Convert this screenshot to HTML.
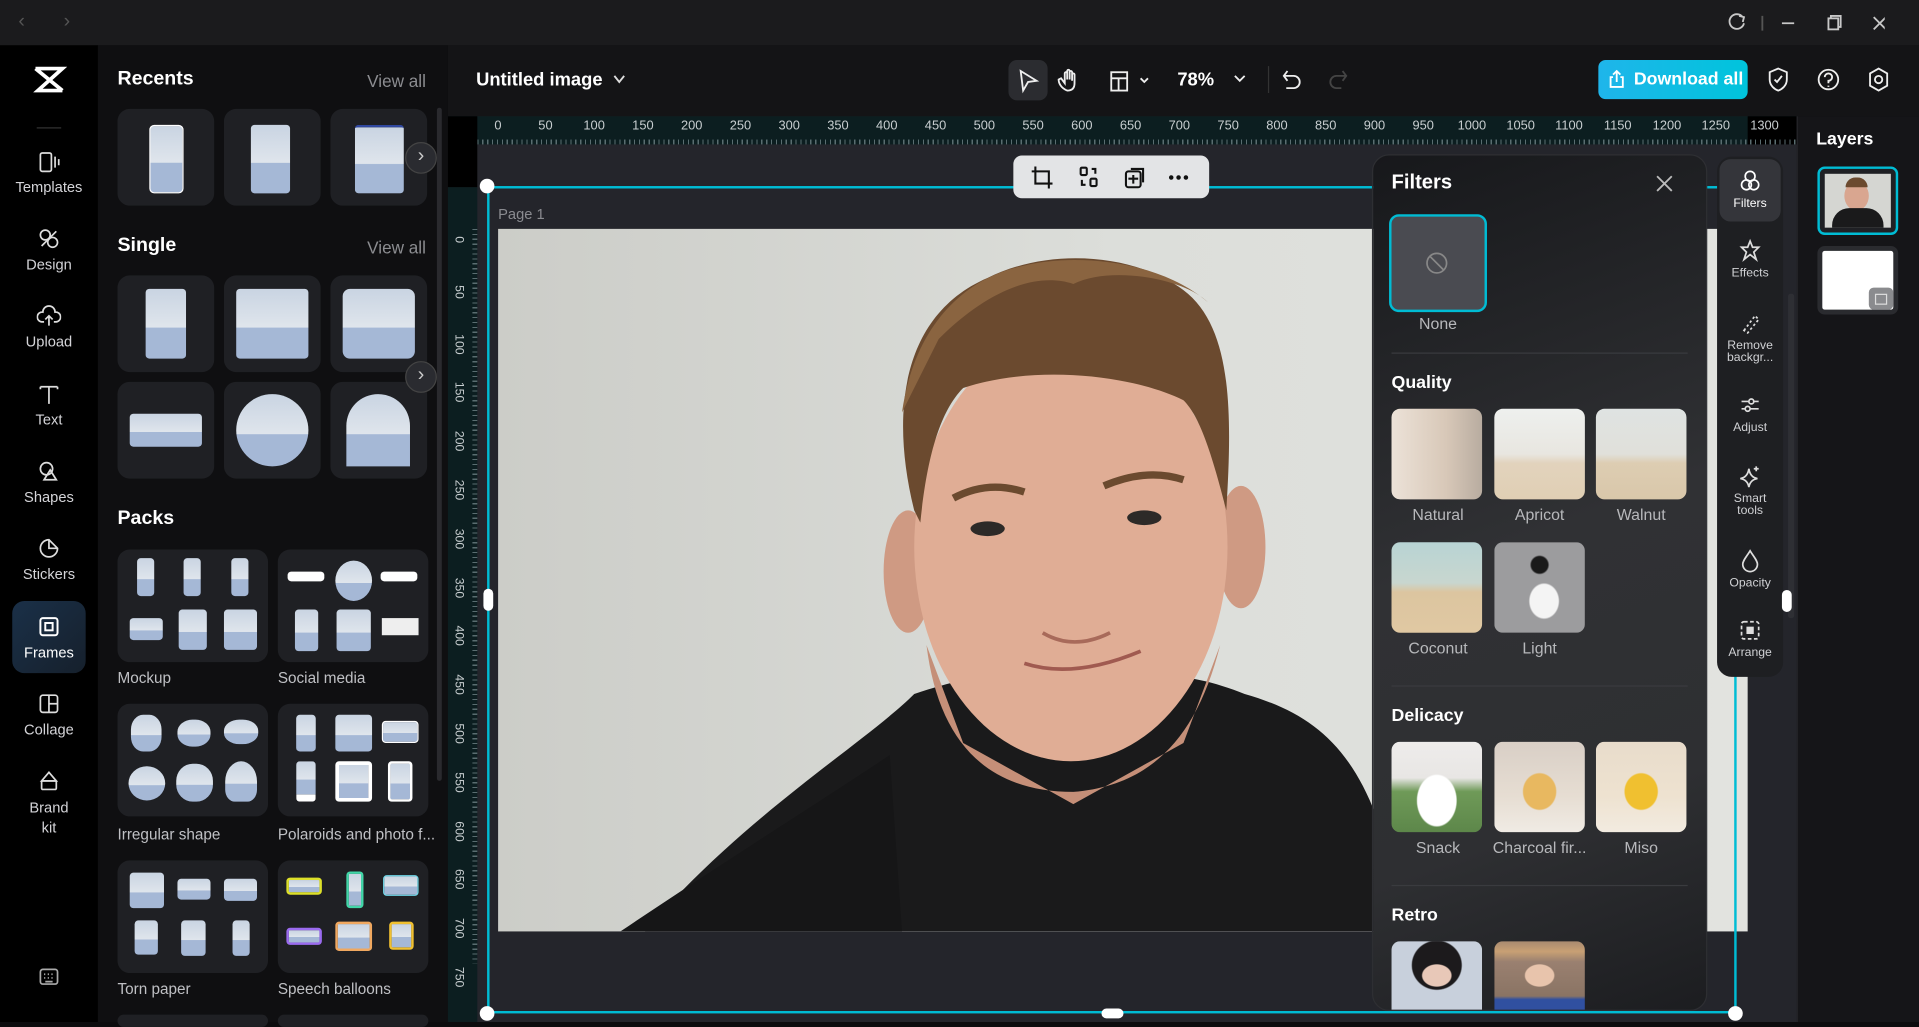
<!DOCTYPE html>
<html><head><meta charset="utf-8">
<style>
*{box-sizing:border-box;margin:0;padding:0}
html,body{width:1919px;height:1022px;overflow:hidden;background:#0c0c0e;font-family:"Liberation Sans",sans-serif}
#w{position:absolute;left:0;top:0;width:1568px;height:835px;transform:scale(1.22385,1.22395);transform-origin:0 0;background:#0c0c0e}
.a{position:absolute}
.rl{color:#cfd3d6}
.card{position:absolute;background:#1f2024;border-radius:10px}
.ph{position:absolute;background:linear-gradient(180deg,#c9d4e2 0%,#dfe5ec 55%,#a5b8d6 56%,#a5b8d6 100%);border-radius:3px}
.nav{position:absolute;left:0;width:80px;text-align:center;color:#d4d4d8;font-size:12px}
.nav svg{display:block;margin:0 auto 4px}
.lbl{position:absolute;color:#bfc0c4;font-size:12.5px}
.h{position:absolute;color:#fff;font-weight:bold;font-size:16px}
.th{position:absolute;width:74px;height:74px;border-radius:7px;overflow:hidden}
.tl{position:absolute;width:90px;text-align:center;color:#b7b8bb;font-size:13px}
.tool{position:absolute;left:0;width:54px;text-align:center;color:#d0d1d4;font-size:10px;line-height:10px}
.tool svg{display:block;margin:0 auto 4px}
</style></head><body><div id="w">
<!-- title bar -->
<div class="a" style="left:0;top:0;width:1568px;height:37px;background:#1b1b1d"></div>
<div class="a" style="left:15px;top:9px;color:#555;font-size:16px">&#8249;</div>
<div class="a" style="left:52px;top:9px;color:#555;font-size:16px">&#8250;</div>
<svg class="a" style="left:1410px;top:10px" width="130" height="18" stroke="#c8c8c8" fill="none" stroke-width="1.5">
<path d="M14 4 A6 6 0 1 0 15 9"/><path d="M11 3 L15 4 L14 8"/>
<line x1="30" y1="3" x2="30" y2="15" stroke="#555"/>
<line x1="46" y1="9" x2="56" y2="9"/>
<rect x="84" y="5" width="8" height="9"/><path d="M86 5 V3 H94 V12 H92"/>
<path d="M121 4 L131 14 M131 4 L121 14"/></svg>
<!-- left rail -->
<div class="a" style="left:0;top:37px;width:80px;height:798px;background:#000"></div>
<svg class="a" style="left:27px;top:54px" width="28" height="24" fill="none" stroke="#fff" stroke-width="3"><path d="M2 2 H24 L4 20 H24 M2 2 L24 20"/></svg>
<div class="a" style="left:30px;top:104px;width:20px;height:1px;background:#333"></div>
<div class="nav" style="top:122px"><svg width="20" height="20" fill="none" stroke="#ddd" stroke-width="1.4"><rect x="3" y="3" width="9" height="15" rx="1.5"/><path d="M15 6v9M18 8v5"/></svg>Templates</div>
<div class="nav" style="top:185px"><svg width="20" height="20" fill="none" stroke="#ddd" stroke-width="1.4"><circle cx="7" cy="7" r="4"/><circle cx="13" cy="13" r="4"/><path d="M4 16 L16 4"/></svg>Design</div>
<div class="nav" style="top:248px"><svg width="20" height="20" fill="none" stroke="#ddd" stroke-width="1.4"><path d="M6 15 H4 A4 4 0 0 1 5 7 A5 5 0 0 1 15 7 A4 4 0 0 1 16 15 H14"/><path d="M10 18 V10 M7 13 L10 10 L13 13"/></svg>Upload</div>
<div class="nav" style="top:312px"><svg width="20" height="20" fill="none" stroke="#ddd" stroke-width="1.4"><path d="M3 4 H17 M10 4 V18 M3 4v2 M17 4v2"/></svg>Text</div>
<div class="nav" style="top:375px"><svg width="20" height="20" fill="none" stroke="#ddd" stroke-width="1.4"><circle cx="8" cy="8" r="5"/><path d="M11 9 L16 17 H6 Z"/></svg>Shapes</div>
<div class="nav" style="top:438px"><svg width="20" height="20" fill="none" stroke="#ddd" stroke-width="1.4"><path d="M10 3 A7 7 0 1 0 17 10 L10 3 Z M10 3 V10 H17"/></svg>Stickers</div>
<div class="a" style="left:10px;top:491px;width:60px;height:59px;border-radius:10px;background:linear-gradient(135deg,#1a3048,#16202c)"></div>
<div class="nav" style="top:502px;color:#fff"><svg width="20" height="20" fill="none" stroke="#fff" stroke-width="1.6"><rect x="3" y="3" width="14" height="14" rx="2"/><rect x="7" y="7" width="6" height="6"/></svg>Frames</div>
<div class="nav" style="top:565px"><svg width="20" height="20" fill="none" stroke="#ddd" stroke-width="1.4"><rect x="3" y="3" width="14" height="14" rx="2"/><path d="M10 3 V17 M10 10 H17"/></svg>Collage</div>
<div class="nav" style="top:628px;line-height:16px"><svg width="20" height="20" fill="none" stroke="#ddd" stroke-width="1.4"><path d="M4 10 L10 3 L16 10 Z"/><rect x="4" y="10" width="12" height="7" rx="1"/></svg>Brand<br>kit</div>
<svg class="a" style="left:31px;top:789px" width="18" height="18" fill="none" stroke="#aaa" stroke-width="1.4"><rect x="2" y="3" width="14" height="12" rx="2"/><path d="M5 7h1M8 7h1M11 7h1M5 10h1M8 10h1M11 10h1M6 13h6"/></svg>
<!-- left panel -->
<div class="a" style="left:80px;top:37px;width:286px;height:798px;background:#0f0f11"></div>
<div class="a" style="left:357px;top:88px;width:4px;height:550px;background:#2a2a2e;border-radius:2px"></div>
<div class="h" style="left:96px;top:56px">Recents</div>
<div class="a" style="left:300px;top:58px;color:#8c8d91;font-size:14px">View all</div>
<div class="card" style="left:96px;top:89px;width:79px;height:79px"></div>
<div class="card" style="left:183px;top:89px;width:79px;height:79px"></div>
<div class="card" style="left:270px;top:89px;width:79px;height:79px"></div>
<div class="ph" style="left:122px;top:102px;width:28px;height:56px;border:1px solid #fff;border-radius:4px"></div>
<div class="ph" style="left:205px;top:102px;width:32px;height:56px"></div>
<div class="ph" style="left:290px;top:102px;width:40px;height:56px;border-top:2px solid #3048a0"></div>
<div class="a" style="left:331px;top:116px;width:26px;height:26px;border-radius:50%;background:#2a2b30;border:1px solid #444;color:#ccc;text-align:center;line-height:22px;font-size:16px">&#8250;</div>
<div class="h" style="left:96px;top:192px">Single</div>
<div class="a" style="left:300px;top:194px;color:#8c8d91;font-size:14px">View all</div>
<div class="card" style="left:96px;top:225px;width:79px;height:79px"></div>
<div class="card" style="left:183px;top:225px;width:79px;height:79px"></div>
<div class="card" style="left:270px;top:225px;width:79px;height:79px"></div>
<div class="ph" style="left:119px;top:236px;width:33px;height:57px"></div>
<div class="ph" style="left:193px;top:236px;width:59px;height:57px"></div>
<div class="ph" style="left:280px;top:236px;width:59px;height:57px;border-radius:6px"></div>
<div class="card" style="left:96px;top:312px;width:79px;height:79px"></div>
<div class="card" style="left:183px;top:312px;width:79px;height:79px"></div>
<div class="card" style="left:270px;top:312px;width:79px;height:79px"></div>
<div class="ph" style="left:106px;top:338px;width:59px;height:27px"></div>
<div class="ph" style="left:193px;top:322px;width:59px;height:59px;border-radius:50%"></div>
<div class="ph" style="left:283px;top:322px;width:52px;height:59px;border-radius:26px 26px 0 0"></div>
<div class="a" style="left:331px;top:295px;width:26px;height:26px;border-radius:50%;background:#2a2b30;border:1px solid #444;color:#ccc;text-align:center;line-height:22px;font-size:16px">&#8250;</div>
<div class="h" style="left:96px;top:415px">Packs</div>
<div class="card" style="left:96px;top:449px;width:123px;height:92px"></div>
<div class="card" style="left:227px;top:449px;width:123px;height:92px"></div>
<div class="ph" style="left:112px;top:456px;width:14px;height:31px"></div><div class="ph" style="left:150px;top:456px;width:14px;height:31px"></div><div class="ph" style="left:189px;top:456px;width:14px;height:31px"></div>
<div class="ph" style="left:106px;top:505px;width:27px;height:18px"></div><div class="ph" style="left:146px;top:498px;width:23px;height:33px"></div><div class="ph" style="left:183px;top:498px;width:27px;height:33px"></div>
<div class="a" style="left:235px;top:467px;width:30px;height:8px;background:#fff;border-radius:3px"></div><div class="ph" style="left:274px;top:458px;width:30px;height:33px;border-radius:50%"></div><div class="a" style="left:311px;top:467px;width:30px;height:8px;background:#fff;border-radius:3px"></div>
<div class="ph" style="left:241px;top:498px;width:19px;height:34px"></div><div class="ph" style="left:275px;top:498px;width:28px;height:34px"></div><div class="a" style="left:312px;top:505px;width:30px;height:14px;background:#eee"></div>
<div class="lbl" style="left:96px;top:547px">Mockup</div><div class="lbl" style="left:227px;top:547px">Social media</div>
<div class="card" style="left:96px;top:575px;width:123px;height:92px"></div>
<div class="card" style="left:227px;top:575px;width:123px;height:92px"></div>
<div class="ph" style="left:107px;top:584px;width:25px;height:30px;border-radius:40%"></div><div class="ph" style="left:145px;top:588px;width:27px;height:22px;border-radius:45%"></div><div class="ph" style="left:183px;top:588px;width:28px;height:20px;border-radius:45%"></div>
<div class="ph" style="left:105px;top:626px;width:30px;height:28px;border-radius:50%"></div><div class="ph" style="left:144px;top:624px;width:30px;height:31px;border-radius:45%"></div><div class="ph" style="left:184px;top:622px;width:26px;height:33px;border-radius:50% 50% 30% 30%"></div>
<div class="ph" style="left:242px;top:584px;width:16px;height:30px"></div><div class="ph" style="left:274px;top:584px;width:30px;height:30px"></div><div class="ph" style="left:312px;top:589px;width:30px;height:18px;border:1px solid #fff"></div>
<div class="ph" style="left:242px;top:622px;width:16px;height:33px;border-bottom:6px solid #fff"></div><div class="ph" style="left:274px;top:622px;width:30px;height:33px;border:3px solid #fff"></div><div class="ph" style="left:317px;top:622px;width:20px;height:33px;border:2px solid #fff"></div>
<div class="lbl" style="left:96px;top:675px">Irregular shape</div><div class="lbl" style="left:227px;top:675px">Polaroids and photo f...</div>
<div class="card" style="left:96px;top:703px;width:123px;height:92px"></div>
<div class="card" style="left:227px;top:703px;width:123px;height:92px"></div>
<div class="ph" style="left:106px;top:713px;width:28px;height:29px"></div><div class="ph" style="left:145px;top:718px;width:27px;height:17px"></div><div class="ph" style="left:183px;top:718px;width:27px;height:18px"></div>
<div class="ph" style="left:110px;top:752px;width:19px;height:28px"></div><div class="ph" style="left:148px;top:752px;width:20px;height:29px"></div><div class="ph" style="left:190px;top:752px;width:14px;height:29px"></div>
<div class="ph" style="left:234px;top:717px;width:29px;height:14px;border:2px solid #dde02a"></div><div class="ph" style="left:283px;top:712px;width:14px;height:30px;border:2px solid #42d6a8"></div><div class="ph" style="left:313px;top:715px;width:29px;height:17px;border:1px solid #6fd7e8"></div>
<div class="ph" style="left:234px;top:758px;width:29px;height:14px;border:2px solid #9b6bf0"></div><div class="ph" style="left:274px;top:753px;width:30px;height:24px;border:2px solid #f0a860"></div><div class="ph" style="left:318px;top:753px;width:20px;height:23px;border:2px solid #f0c030"></div>
<div class="lbl" style="left:96px;top:801px">Torn paper</div><div class="lbl" style="left:227px;top:801px">Speech balloons</div>
<div class="card" style="left:96px;top:829px;width:123px;height:10px"></div><div class="card" style="left:227px;top:829px;width:123px;height:10px"></div>
<!-- top toolbar -->
<div class="a" style="left:366px;top:37px;width:1202px;height:58px;background:#141416"></div>
<div class="a" style="left:389px;top:57px;color:#fff;font-size:15px;font-weight:bold">Untitled image</div>
<svg class="a" style="left:500px;top:60px" width="12" height="10" fill="none" stroke="#ddd" stroke-width="1.5"><path d="M2 2 L6 7 L10 2"/></svg>
<div class="a" style="left:824px;top:49px;width:32px;height:33px;border-radius:7px;background:#2b2c30"></div>
<svg class="a" style="left:830px;top:55px" width="200" height="22" fill="none" stroke="#eee" stroke-width="1.5">
<path d="M4 3 L17 11 L10 12 L6 19 Z"/>
<path d="M42 19 C37 17 35 13 35 10 L37 9 L40 13 V5 A1 1 0 0 1 42 5 V10 V3 A1 1 0 0 1 44 3 V10 V4 A1 1 0 0 1 46 4 V11 V6 A1 1 0 0 1 48 6 V13 C48 17 46 19 42 19 Z"/>
<rect x="78" y="4" width="13" height="15"/><path d="M78 9 H91 M84 9 V19"/><path d="M102 9 L105 12 L108 9"/>
<path d="M179 7 L183 11 L187 7"/></svg>
<div class="a" style="left:962px;top:57px;color:#fff;font-size:15px;font-weight:bold">78%</div>
<div class="a" style="left:1036px;top:54px;width:1px;height:22px;background:#333"></div>
<svg class="a" style="left:1046px;top:54px" width="60" height="22" fill="none" stroke-width="1.5"><path d="M6 4 L3 8 L6 12 M3 8 H11 A5 5 0 0 1 11 18 H5" stroke="#eee"/><path d="M51 4 L54 8 L51 12 M54 8 H46 A5 5 0 0 0 46 18 H50" stroke="#444"/></svg>
<div class="a" style="left:1306px;top:49px;width:122px;height:32px;border-radius:6px;background:linear-gradient(90deg,#1fb5ea,#00c4dc)"></div>
<svg class="a" style="left:1313px;top:57px" width="16" height="16" fill="none" stroke="#fff" stroke-width="1.5"><path d="M5 6 H3 V14 H13 V6 H11 M8 10 V1 M5 4 L8 1 L11 4"/></svg>
<div class="a" style="left:1335px;top:57px;color:#fff;font-size:14.5px;font-weight:bold">Download all</div>
<svg class="a" style="left:1443px;top:54px" width="110" height="22" fill="none" stroke="#eee" stroke-width="1.5"><path d="M10 2 L17 5 V11 C17 16 13 19 10 20 C7 19 3 16 3 11 V5 Z M7 11 L9 13 L13 8"/><circle cx="51" cy="11" r="8"/><path d="M48 9 A3 3 0 1 1 51 12 V14 M51 16 V17"/><path d="M92 2 L99 6 V16 L92 20 L85 16 V6 Z"/><circle cx="92" cy="11" r="3"/></svg>
<!-- canvas area -->
<div class="a" style="left:366px;top:95px;width:1102px;height:740px;background:#24252b"></div>
<div class="a" style="left:366px;top:95px;width:1102px;height:23px;background:#0c1e20"></div>
<div class="a" style="left:366px;top:95px;width:24px;height:58px;background:#000"></div>
<div class="a" style="left:1428px;top:95px;width:40px;height:23px;background:#000"></div>
<div class="a" style="left:366px;top:153px;width:24px;height:682px;background:#0c1e20"></div>
<div class="a" style="left:390px;top:114px;width:1078px;height:4px;background:repeating-linear-gradient(90deg,#5a6d70 0 1px,transparent 1px 4px)"></div>
<div class="a" style="left:386px;top:187px;width:4px;height:600px;background:repeating-linear-gradient(180deg,#5a6d70 0 1px,transparent 1px 4px)"></div>
<div class="a" style="left:0;top:97px;font-size:10.5px;color:#c8ced0" id="rh"></div>
<!-- photo -->
<div class="a" style="left:407px;top:187px;width:1021px;height:574px;overflow:hidden;background:linear-gradient(90deg,#cccdc8,#dcdeda 50%,#e2e3df)">
<svg width="1021" height="574">
<ellipse cx="455" cy="330" rx="20" ry="50" fill="#cf9a83" transform="translate(-120,-50)"/>
<ellipse cx="607" cy="260" rx="20" ry="50" fill="#cf9a83"/>
<path d="M120 574 C200 480 300 420 340 380 C400 360 430 360 470 380 C520 360 560 360 610 380 C680 400 720 440 740 574 Z" fill="#1a1a1b"/>
<path d="M100 574 C180 520 260 470 320 430 L330 574 Z" fill="#161617"/>
<path d="M350 340 C360 420 400 460 470 460 C530 455 570 420 590 340 L560 420 L470 470 L380 420 Z" fill="#c58f78"/>
<ellipse cx="468" cy="260" rx="128" ry="175" fill="#e0ad95"/>
<path d="M340 230 C320 150 330 70 400 40 C450 15 520 20 560 50 C600 80 600 150 595 230 C580 170 570 150 560 140 C520 120 440 110 380 130 C360 150 350 190 345 240 Z" fill="#6b4a2f"/>
<path d="M330 150 C340 80 380 40 430 30 C470 20 540 25 580 60 C560 40 500 30 470 45 C440 35 400 50 360 90 Z" fill="#8a6440"/>
<path d="M372 220 Q400 205 430 215" stroke="#6b4a2f" stroke-width="6" fill="none"/>
<path d="M495 210 Q530 195 560 205" stroke="#6b4a2f" stroke-width="6" fill="none"/>
<ellipse cx="400" cy="245" rx="14" ry="6" fill="#2d2a28"/><ellipse cx="528" cy="236" rx="14" ry="6" fill="#2d2a28"/>
<path d="M445 330 Q470 345 500 330" stroke="#a86a5a" stroke-width="3" fill="none"/>
<path d="M430 355 Q470 368 525 345" stroke="#a05a50" stroke-width="3" fill="none"/>
</svg></div>
<div class="a" style="left:407px;top:168px;color:#8a8b90;font-size:12px">Page 1</div>
<div class="a" style="left:398px;top:152px;width:1021px;height:676px;border:2px solid #00bcd4"></div>
<div class="a" style="left:392px;top:146px;width:12px;height:12px;border-radius:50%;background:#fff"></div>
<div class="a" style="left:392px;top:822px;width:12px;height:12px;border-radius:50%;background:#fff"></div>
<div class="a" style="left:1412px;top:822px;width:12px;height:12px;border-radius:50%;background:#fff"></div>
<div class="a" style="left:395px;top:481px;width:8px;height:18px;border-radius:4px;background:#fff"></div>
<div class="a" style="left:900px;top:824px;width:18px;height:8px;border-radius:4px;background:#fff"></div>
<!-- floating toolbar -->
<div class="a" style="left:828px;top:127px;width:160px;height:35px;border-radius:7px;background:#e3e4e6"></div>
<svg class="a" style="left:840px;top:133px" width="140" height="24" fill="none" stroke="#111" stroke-width="1.7"><path d="M6 3 V17 H20 M3 7 H17 V21"/><rect x="43" y="4" width="5" height="6" rx="1"/><rect x="51" y="13" width="5" height="6" rx="1"/><path d="M52 5 H55 V9 M47 18 H44 V14"/><rect x="80" y="7" width="12" height="13" rx="2"/><path d="M84 5 H94 V16 M86 10 V17 M82 13 H90"/><circle cx="117" cy="12" r="1" fill="#111"/><circle cx="123" cy="12" r="1" fill="#111"/><circle cx="129" cy="12" r="1" fill="#111"/></svg>
<!-- filters panel -->
<div class="a" style="left:1121px;top:126px;width:274px;height:700px;border-radius:14px;background:linear-gradient(160deg,#17181b 0%,#303134 45%,#2e2f32 75%,#1c1d20 100%);border:1px solid #2e2f33"></div>
<div class="a" style="left:1137px;top:140px;color:#fff;font-size:16.5px;font-weight:bold">Filters</div>
<svg class="a" style="left:1352px;top:142px" width="16" height="16" stroke="#bbb" stroke-width="1.5"><path d="M2 2 L14 14 M14 2 L2 14"/></svg>
<div class="a" style="left:1135px;top:175px;width:80px;height:80px;border-radius:8px;border:2px solid #00bcd4;background:#4a4b51"></div>
<svg class="a" style="left:1164px;top:205px" width="20" height="20" fill="none" stroke="#888" stroke-width="1.4"><circle cx="10" cy="10" r="8"/><path d="M4 4 L16 16"/></svg>
<div class="tl" style="left:1130px;top:257px">None</div>
<div class="a" style="left:1137px;top:288px;width:242px;height:1px;background:#3a3b3f"></div>
<div class="a" style="left:1137px;top:305px;color:#fff;font-size:14.5px;font-weight:bold">Quality</div>
<div class="th" style="left:1137px;top:334px;background:linear-gradient(90deg,#ece2d8,#d8c8b8 60%,#b8aca0)"></div>
<div class="th" style="left:1221px;top:334px;background:linear-gradient(180deg,#eef0ee 0%,#e8e6e0 50%,#e2d3bd 60%,#e0cfb4)"></div>
<div class="th" style="left:1304px;top:334px;background:linear-gradient(180deg,#dfe3e2 0%,#e0e0da 50%,#ddcdb2 60%,#d9c7aa)"></div>
<div class="tl" style="left:1130px;top:413px">Natural</div><div class="tl" style="left:1213px;top:413px">Apricot</div><div class="tl" style="left:1296px;top:413px">Walnut</div>
<div class="th" style="left:1137px;top:443px;background:linear-gradient(180deg,#b8d4d4 0%,#c8d6cf 45%,#dcc5a0 55%,#e0c8a2)"></div>
<div class="th" style="left:1221px;top:443px;background:radial-gradient(ellipse at 55% 65%,#f4f4f4 0 20%,transparent 22%),radial-gradient(circle at 50% 25%,#1a1a1a 0 10%,transparent 12%),#9c9c9e"></div>
<div class="tl" style="left:1130px;top:522px">Coconut</div><div class="tl" style="left:1213px;top:522px">Light</div>
<div class="a" style="left:1137px;top:560px;width:242px;height:1px;background:#3a3b3f"></div>
<div class="a" style="left:1137px;top:577px;color:#fff;font-size:14.5px;font-weight:bold">Delicacy</div>
<div class="th" style="left:1137px;top:606px;background:radial-gradient(ellipse at 50% 65%,#fff 0 30%,transparent 32%),linear-gradient(180deg,#eeeceb 0%,#e8e6e4 40%,#6f9a58 55%,#5d874a)"></div>
<div class="th" style="left:1221px;top:606px;background:radial-gradient(ellipse at 50% 55%,#e8b860 0 25%,transparent 27%),linear-gradient(180deg,#d9cfc6 0%,#e6ddd2 60%,#f0ebe4)"></div>
<div class="th" style="left:1304px;top:606px;background:radial-gradient(ellipse at 50% 55%,#f0c030 0 25%,transparent 27%),linear-gradient(180deg,#e8dccb 0%,#eee2d0 60%,#f2ebe0)"></div>
<div class="tl" style="left:1130px;top:685px">Snack</div><div class="tl" style="left:1213px;top:685px">Charcoal fir...</div><div class="tl" style="left:1296px;top:685px">Miso</div>
<div class="a" style="left:1137px;top:723px;width:242px;height:1px;background:#3a3b3f"></div>
<div class="a" style="left:1137px;top:740px;color:#fff;font-size:14.5px;font-weight:bold">Retro</div>
<div class="th" style="left:1137px;top:769px;height:56px;border-radius:7px 7px 0 0;background:radial-gradient(ellipse at 50% 50%,#e8c8b8 0 22%,transparent 24%),radial-gradient(ellipse at 50% 35%,#1c1a1c 0 38%,transparent 40%),#c8d0dc"></div>
<div class="th" style="left:1221px;top:769px;height:56px;border-radius:7px 7px 0 0;background:radial-gradient(ellipse at 50% 50%,#e8c4ac 0 22%,transparent 24%),linear-gradient(180deg,#a88a70 0,#c8a074 15%,#9a8070 30%,#8a7464 80%,#3050a0 85%)"></div>
<!-- tool strip -->
<div class="a" style="left:1403px;top:128px;width:54px;height:425px;border-radius:12px;background:#1e1f22"></div>
<div class="a" style="left:1405px;top:130px;width:50px;height:51px;border-radius:9px;background:#34353a"></div>
<div class="a" style="left:1403px;top:0;width:0"></div>
<div class="tool" style="left:1403px;top:138px"><svg width="20" height="20" fill="none" stroke="#fff" stroke-width="1.4"><circle cx="10" cy="6" r="4"/><circle cx="7" cy="13" r="4"/><circle cx="13" cy="13" r="4"/></svg><span style="color:#fff">Filters</span></div>
<div class="tool" style="left:1403px;top:195px"><svg width="20" height="20" fill="none" stroke="#ddd" stroke-width="1.4"><path d="M10 2 L12 7 L17 7 L13 11 L15 17 L10 13 L5 17 L7 11 L3 7 L8 7 Z"/></svg>Effects</div>
<div class="tool" style="left:1403px;top:254px"><svg width="20" height="20" fill="none" stroke="#ddd" stroke-width="1.4"><path d="M5 16 L14 4 L17 7 L8 18 Z" stroke-dasharray="2 2"/></svg>Remove<br>backgr...</div>
<div class="tool" style="left:1403px;top:321px"><svg width="20" height="20" fill="none" stroke="#ddd" stroke-width="1.4"><path d="M3 7 H17 M3 13 H17"/><circle cx="11" cy="7" r="2" fill="#1e1f22"/><circle cx="8" cy="13" r="2" fill="#1e1f22"/></svg>Adjust</div>
<div class="tool" style="left:1403px;top:379px"><svg width="20" height="20" fill="none" stroke="#ddd" stroke-width="1.4"><path d="M9 4 Q10 11 16 12 Q10 13 9 19 Q8 13 2 12 Q8 11 9 4 Z M15 2 v4 M13 4 h4"/></svg>Smart<br>tools</div>
<div class="tool" style="left:1403px;top:448px"><svg width="20" height="20" fill="none" stroke="#ddd" stroke-width="1.4"><path d="M10 2 C13 7 16 10 16 13 A6 6 0 0 1 4 13 C4 10 7 7 10 2 Z"/></svg>Opacity</div>
<div class="tool" style="left:1403px;top:505px"><svg width="20" height="20" fill="none" stroke="#ddd" stroke-width="1.4" stroke-dasharray="3 2"><rect x="3" y="3" width="14" height="14" rx="2"/><rect x="7" y="7" width="6" height="6" fill="#ddd" stroke="none"/></svg>Arrange</div>
<div class="a" style="left:1461px;top:240px;width:5px;height:265px;background:#2e2f34;border-radius:2px"></div>
<div class="a" style="left:1456px;top:482px;width:8px;height:18px;border-radius:4px;background:#fff"></div>
<!-- layers -->
<div class="a" style="left:1468px;top:95px;width:100px;height:740px;background:#151518;border-left:1px solid #25262a"></div>
<div class="a" style="left:1484px;top:106px;color:#fff;font-size:14.5px;font-weight:bold">Layers</div>
<div class="a" style="left:1485px;top:136px;width:66px;height:56px;border-radius:6px;border:2px solid #00bcd4;background:#1f2024;padding:4px">
<div style="width:100%;height:100%;background:#d5d6d2;position:relative;overflow:hidden"><div style="position:absolute;left:16px;top:6px;width:20px;height:24px;border-radius:50%;background:#d9a690"></div><div style="position:absolute;left:17px;top:3px;width:18px;height:8px;border-radius:8px 8px 0 0;background:#6b4a2f"></div><div style="position:absolute;left:6px;top:28px;width:42px;height:20px;border-radius:14px 14px 0 0;background:#1a1a1b"></div></div></div>
<div class="a" style="left:1485px;top:201px;width:66px;height:56px;border-radius:6px;background:#2a2b2f;padding:4px"><div style="width:100%;height:100%;background:#fff;border-radius:2px"></div></div>
<div class="a" style="left:1527px;top:235px;width:20px;height:18px;border-radius:4px;background:#8a8b8e"></div>
<div class="a" style="left:1532px;top:240px;width:10px;height:9px;border:1px solid #ddd"></div>
</div>
<script>
var r=document.getElementById('rh'),h='';
for(var i=0;i<=26;i++){var x=406+i*39.85;h+='<span style="position:absolute;left:'+(x-(i==0?2:(i<2?6:(i<20?9:12))))+'px;top:0;color:#c8ced0;font-size:10.5px">'+(i*50)+'</span>';}
for(var j=0;j<=15;j++){var y=187+j*39.8;h+='<span style="position:absolute;left:368px;top:'+(y-91)+'px;color:#c8ced0;font-size:10px;transform:rotate(90deg);transform-origin:0 0;white-space:nowrap;margin-left:12px">'+(j*50)+'</span>';}
r.innerHTML=h;
</script>
</body></html>
